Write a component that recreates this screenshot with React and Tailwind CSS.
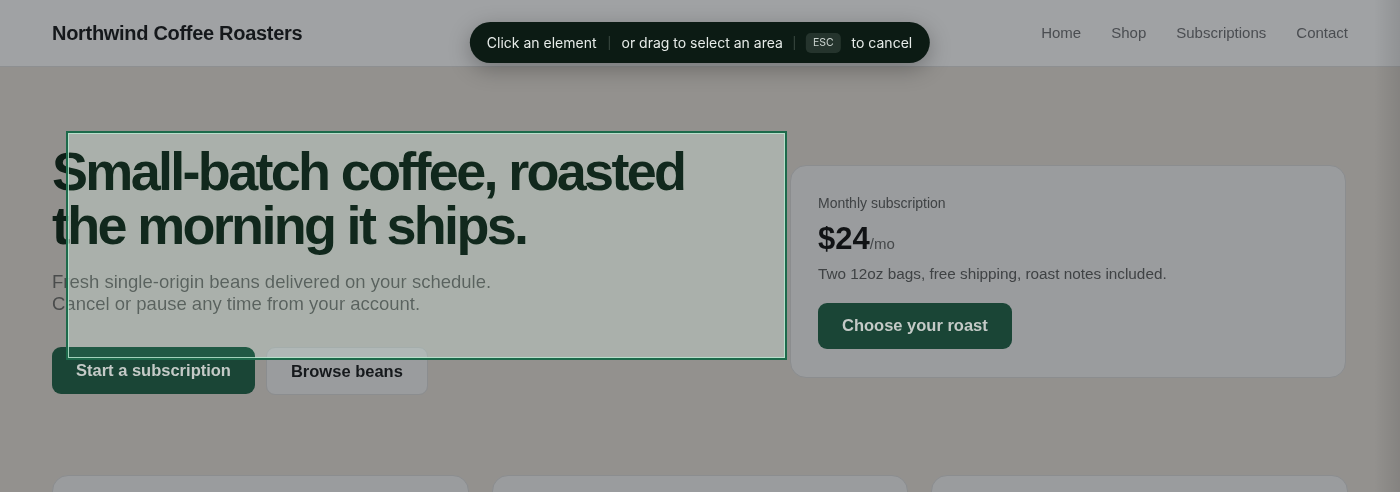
import { useState } from 'react';

const navLinks = ['Home', 'Shop', 'Subscriptions', 'Contact'];

function PickerToolbar() {
  return (
    <div className="fixed left-1/2 top-[22px] z-30 flex h-[41px] -translate-x-1/2 items-center rounded-full bg-[#0c1b14] pl-[17px] pr-[18px] font-['Inter',sans-serif] text-[14px] text-[#e6ebe8] shadow-[0_6px_22px_rgba(0,0,0,0.28)]">
      <span>Click an element</span>
      <span className="mx-[12px] h-[14px] w-px bg-[#3b4a43]" />
      <span>or drag to select an area</span>
      <span className="mx-[11px] h-[14px] w-px bg-[#3b4a43]" />
      <kbd className="rounded-[5px] bg-[#25342d] px-[7px] py-[3px] font-['Inter',sans-serif] text-[10.5px] leading-[14px] text-[#cbd3cf]">
        ESC
      </kbd>
      <span className="ml-[11px]">to cancel</span>
    </div>
  );
}

// no z-index on the wrapper so the fill blends with the page under it
function SelectionBox() {
  return (
    <div className="pointer-events-none absolute left-[66px] top-[131px] h-[229px] w-[721px]">
      <div className="absolute inset-0 bg-[#9ba4a0] mix-blend-overlay" />
      <div className="absolute inset-0 border-2 border-[#1d6a4b] shadow-[inset_0_0_0_1px_rgba(186,232,208,0.85)]" />
    </div>
  );
}

export default function App() {
  const [plan] = useState({ price: 24, note: 'Two 12oz bags, free shipping, roast notes included.' });

  return (
    <div className="relative min-h-screen overflow-hidden bg-[#93918e] font-['Liberation_Sans',Arial,sans-serif]">
      <header className="flex h-[67px] items-center justify-between border-b border-[#8d8f91] bg-[#a0a2a4] px-[52px]">
        <div className="text-[20px] font-bold tracking-[-0.015em] text-[#15181b]">
          Northwind Coffee Roasters
        </div>
        <nav className="flex items-center gap-[30px] text-[15px] text-[#4a4d51]">
          {navLinks.map((l) => (
            <a key={l} href="#">
              {l}
            </a>
          ))}
        </nav>
      </header>

      <main className="px-[52px]">
        <section className="grid grid-cols-[1fr_558px] items-center gap-[32px] pb-[80px] pt-[80px]">
          <div>
            <h1 className="-mt-[3px] max-w-[700px] text-[54px] font-bold leading-none tracking-[-0.05em] text-[#0e1f17]">
              Small-batch coffee, roasted the morning it ships.
            </h1>
            <p className="mt-[19px] text-[18.5px] leading-[22px] text-[#4a4c4c]">
              Fresh single-origin beans delivered on your schedule.
              <br />
              Cancel or pause any time from your account.
            </p>
            <div className="mt-[32px] flex gap-[11px]">
              <button className="h-[47px] rounded-[9px] bg-[#1a4536] px-[24px] text-[16.5px] font-bold text-[#c4cac7]">
                Start a subscription
              </button>
              <button className="h-[48px] rounded-[9px] border border-[#8b8d8f] bg-[#9a9c9e] px-[24px] text-[16.5px] font-bold text-[#16191c]">
                Browse beans
              </button>
            </div>
          </div>

          <div className="mr-[2px] rounded-[16px] border border-[#8b8d8f] bg-[#9a9c9e] px-[27px] pb-[28px] pt-[27px]">
            <p className="text-[14px] leading-[20px] text-[#3f4244]">Monthly subscription</p>
            <div className="mt-[8px] flex items-baseline leading-[36px]">
              <span className="text-[31px] font-bold text-[#111315]">${plan.price}</span>
              <span className="text-[15px] text-[#45484a]">/mo</span>
            </div>
            <p className="mt-[1px] text-[15.3px] leading-[22px] text-[#3f4244]">{plan.note}</p>
            <button className="mt-[18px] h-[46px] rounded-[9px] bg-[#1a4536] px-[24px] text-[16.5px] font-bold text-[#c4cac7]">
              Choose your roast
            </button>
          </div>
        </section>

        <section className="grid grid-cols-3 gap-[23px]">
          {[0, 1, 2].map((i) => (
            <div key={i} className="h-[160px] rounded-[16px] border border-[#8b8d8f] bg-[#9a9c9e]" />
          ))}
        </section>
      </main>

      <SelectionBox />
      <div className="pointer-events-none absolute right-0 top-0 h-full w-[26px] bg-gradient-to-r from-transparent to-black/10" />
      <PickerToolbar />
    </div>
  );
}
